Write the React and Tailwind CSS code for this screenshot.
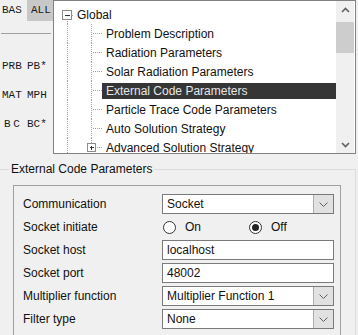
import React from 'react';

const treeItems = [
  { label: 'Problem Description' },
  { label: 'Radiation Parameters' },
  { label: 'Solar Radiation Parameters' },
  { label: 'External Code Parameters', selected: true },
  { label: 'Particle Trace Code Parameters' },
  { label: 'Auto Solution Strategy' },
  { label: 'Advanced Solution Strategy', collapsed: true },
];

const DOT = '#a0a0a0';

// connector lines for a child row (x 54..102 of the tree)
const ChildLines = ({ collapsed }) => (
  <svg width="48" height="19" className="shrink-0" shapeRendering="crispEdges">
    <line x1="13.5" y1="0" x2="13.5" y2="19" stroke={DOT} strokeDasharray="1 1" />
    <line x1="37.5" y1="0" x2="37.5" y2={collapsed ? 5 : 19} stroke={DOT} strokeDasharray="1 1" />
    {collapsed ? (
      <>
        <rect x="33.5" y="5.5" width="8" height="8" fill="#fff" stroke="#8c8c8c" />
        <line x1="35.5" y1="9.5" x2="40" y2="9.5" stroke="#333" />
        <line x1="37.5" y1="7.5" x2="37.5" y2="12" stroke="#333" />
        <line x1="42.5" y1="9.5" x2="48" y2="9.5" stroke={DOT} strokeDasharray="1 1" />
      </>
    ) : (
      <line x1="38.5" y1="9.5" x2="48" y2="9.5" stroke={DOT} strokeDasharray="1 1" />
    )}
  </svg>
);

const RootLines = () => (
  <svg width="19" height="19" className="shrink-0" shapeRendering="crispEdges">
    <line x1="13.5" y1="14" x2="13.5" y2="19" stroke={DOT} strokeDasharray="1 1" />
    <rect x="8.5" y="5.5" width="9" height="9" fill="#fff" stroke="#8c8c8c" />
    <line x1="10.5" y1="10" x2="16" y2="10" stroke="#333" />
    <line x1="18" y1="10" x2="19" y2="10" stroke={DOT} />
  </svg>
);

const Chevron = ({ up }) => (
  <svg width="9" height="6" viewBox="0 0 9 6">
    <polyline
      points={up ? '1,5 4.5,1.5 8,5' : '1,1 4.5,4.5 8,1'}
      fill="none"
      stroke="#606060"
      strokeWidth="1.6"
    />
  </svg>
);

const SmallChevron = () => (
  <svg width="9" height="5" viewBox="0 0 9 5">
    <polyline points="0.5,0.5 4.5,4.5 8.5,0.5" fill="none" stroke="#606060" strokeWidth="1" />
  </svg>
);

const SelectBox = ({ value }) => (
  <div className="flex h-[20px] w-[172px] border border-[#7a7a7a] bg-white">
    <span className="flex-1 pl-[4px] leading-[18px]">{value}</span>
    <span className="flex w-[20px] items-center justify-center border-l border-[#adadad] bg-[#e1e1e1]">
      <SmallChevron />
    </span>
  </div>
);

const TextBox = ({ value }) => (
  <div className="h-[20px] w-[172px] border border-[#7a7a7a] bg-white pl-[4px] leading-[18px]">
    {value}
  </div>
);

const Radio = ({ checked, label, className }) => (
  <span className={`flex items-center ${className}`}>
    <span className="ml-[1px] flex h-[13px] w-[13px] items-center justify-center rounded-full border border-[#333] bg-white">
      {checked && <span className="h-[7px] w-[7px] rounded-full bg-[#222]" />}
    </span>
    <span className="ml-[9px]">{label}</span>
  </span>
);

const Row = ({ label, children }) => (
  <div className="flex h-[20px] items-center">
    <span className="w-[139px]">{label}</span>
    {children}
  </div>
);

export default function App() {
  return (
    <div className="h-[335px] w-[358px] overflow-hidden bg-[#f0f0f0] font-['Liberation_Sans',Arial,sans-serif] text-[12px] text-[#111]">
      {/* top: tag column + tree */}
      <div className="flex h-[154px]">
        <div className="w-[53px] font-['Liberation_Mono',monospace] text-[11px] text-[#1a1a1a]">
          <div className="flex h-[21px] items-center">
            <span className="w-[27px] pl-[2px]">BAS</span>
            <span className="flex h-full w-[26px] items-center bg-[#c8c8c8] pl-[4px]">ALL</span>
          </div>
          <div className="ml-[1px] mt-[12px] h-px w-[50px] bg-[#a0a0a0]" />
          <div className="mt-[22px] flex flex-col gap-[9px]">
            <div className="flex h-[20px] items-center">
              <span className="w-[27px] pl-[2px]">PRB</span>
              <span>PB*</span>
            </div>
            <div className="flex h-[20px] items-center">
              <span className="w-[27px] pl-[2px]">MAT</span>
              <span>MPH</span>
            </div>
            <div className="flex h-[20px] items-center">
              <span className="w-[27px] pl-[4px] tracking-[-2px]">B C</span>
              <span>BC*</span>
            </div>
          </div>
        </div>

        <div className="flex w-[303px] overflow-hidden border border-[#828282] bg-white">
          <div className="flex-1 pt-[4px]">
            <div className="flex h-[19px] items-center">
              <RootLines />
              <span className="px-[4px]">Global</span>
            </div>
            {treeItems.map((item) => (
              <div key={item.label} className="flex h-[19px] items-center">
                <ChildLines collapsed={item.collapsed} />
                <span
                  className={`h-[16px] flex-1 whitespace-nowrap px-[4px] leading-[16px] ${
                    item.selected ? 'bg-[#363636] text-[#e6e6e6]' : ''
                  }`}
                >
                  {item.label}
                </span>
              </div>
            ))}
          </div>
          <div className="mr-px flex w-[18px] flex-col bg-[#f0f0f0]">
            <div className="flex h-[17px] items-center justify-center">
              <Chevron up />
            </div>
            <div className="mt-[4px] h-[31px] bg-[#cdcdcd]" />
            <div className="flex-1" />
            <div className="flex h-[17px] items-center justify-center">
              <Chevron />
            </div>
          </div>
        </div>
      </div>

      {/* group box */}
      <fieldset className="-ml-px mt-[8px] w-[357px] border border-[#dcdcdc] px-0">
        <legend className="ml-[9px] px-[2px] leading-[15px]">External Code Parameters</legend>
        <div className="ml-[13px] mt-[8px] h-[200px] w-[328px] border border-[#a0a0a0] pl-[9px] pt-[8px]">
          <div className="flex flex-col gap-[3px]">
            <Row label="Communication">
              <SelectBox value="Socket" />
            </Row>
            <Row label="Socket initiate">
              <Radio label="On" className="w-[86px]" />
              <Radio label="Off" checked />
            </Row>
            <Row label="Socket host">
              <TextBox value="localhost" />
            </Row>
            <Row label="Socket port">
              <TextBox value="48002" />
            </Row>
            <Row label="Multiplier function">
              <SelectBox value="Multiplier Function 1" />
            </Row>
            <Row label="Filter type">
              <SelectBox value="None" />
            </Row>
          </div>
        </div>
      </fieldset>
    </div>
  );
}
